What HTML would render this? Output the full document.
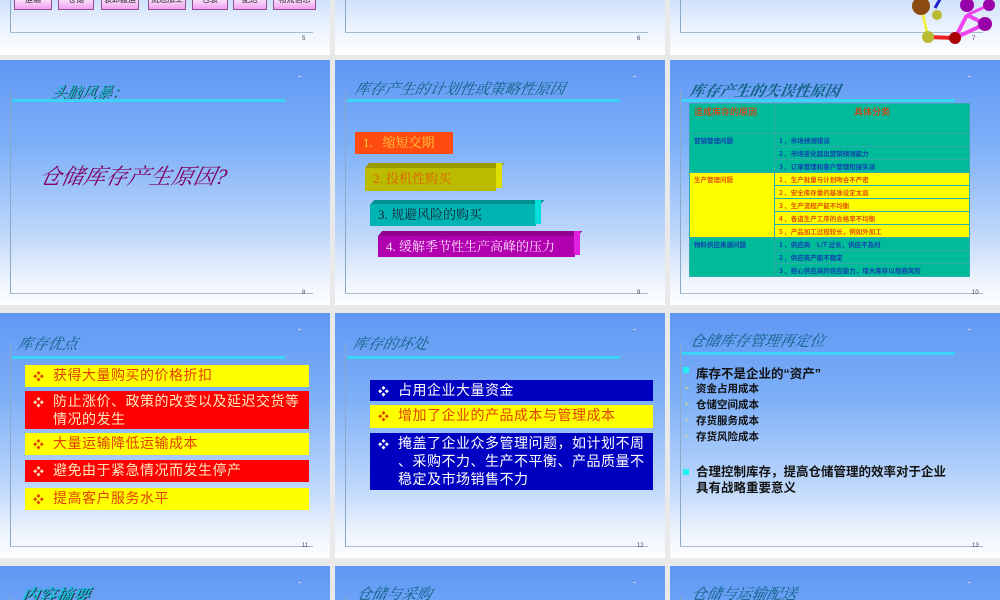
<!DOCTYPE html><html><head><meta charset="utf-8"><style>
*{margin:0;padding:0;box-sizing:border-box}
html,body{width:1000px;height:600px;overflow:hidden}
body{background:#e9e9e9;position:relative;font-family:"Liberation Sans","Noto Sans CJK SC",sans-serif}
.s{position:absolute;width:330px;height:245px;overflow:hidden;background:linear-gradient(180deg,#5f98f4 0%,#7eb0f8 35%,#bcd6fa 70%,#eef4fd 90%,#fdfeff 100%);background-size:100% 245px;background-repeat:no-repeat}
.s *{position:absolute}
.s table,.s table *{position:static}
.vl{left:10px;top:30px;width:1px;height:203px;background:#8aa8c8}
.hl{left:10px;top:233px;width:303px;height:1px;background:#a8bcd0}
.pn{left:302px;top:230px;font-size:6px;color:#446}
.ul{left:12px;top:39px;width:273px;height:3px;background:#3cd4f4}
.dash{left:298px;top:16px;width:3px;height:1px;background:#ccd}
.t{font-family:"Liberation Serif","Noto Serif CJK SC",serif;font-style:italic;color:#1a6a9a;font-size:15px;white-space:nowrap;transform:skewX(-12deg)}
.tc{color:#15c0d8;text-shadow:1px 1px 0 #234}
.b{font-size:13px;font-family:"Liberation Serif","Noto Serif CJK SC",serif;white-space:nowrap;padding-left:8px;line-height:22px}
.box{left:25px;width:284px;font-size:14px;line-height:18px;padding:1px 0 2px 28px;font-family:"Noto Sans CJK SC",sans-serif;white-space:nowrap;letter-spacing:0.5px}
.box i{font-style:normal;left:8px;top:2px;font-size:11px}
table{position:absolute!important;border-collapse:collapse;font-size:6.5px;font-weight:bold;font-family:"Noto Sans CJK SC",sans-serif}
td{border:1px solid #3aa;height:13px;padding:0 4px;vertical-align:top;line-height:12px;white-space:nowrap}
.g{background:#00bb99;color:#1040b0}.y{background:#ffff00;color:#e05000}
.btn{top:-6px;height:16px;background:linear-gradient(#fff,#f0a0f0);border:1px solid #905090;font-size:8px;text-align:center;line-height:10px;color:#222}
</style></head><body>

<!-- row0 -->
<div class="s" style="left:0;top:-190px;">
 <div class="vl" style="top:150px;height:73px"></div><div class="hl" style="top:222px"></div><div class="pn" style="top:226px">5</div>
 <div class="btn" style="left:14px;top:184px;width:38px">运输</div>
 <div class="btn" style="left:58px;top:184px;width:36px">仓储</div>
 <div class="btn" style="left:101px;top:184px;width:38px">装卸搬运</div>
 <div class="btn" style="left:148px;top:184px;width:38px">流通加工</div>
 <div class="btn" style="left:192px;top:184px;width:36px">包装</div>
 <div class="btn" style="left:233px;top:184px;width:34px">配送</div>
 <div class="btn" style="left:273px;top:184px;width:43px">物流信息</div>
</div>
<div class="s" style="left:335px;top:-190px;"><div class="vl" style="top:150px;height:73px"></div><div class="hl" style="top:222px"></div><div class="pn" style="top:226px">6</div></div>
<div class="s" style="left:670px;top:-190px;"><div class="vl" style="top:150px;height:73px"></div><div class="hl" style="top:222px"></div><div class="pn" style="top:226px">7</div>
 <svg style="left:225px;top:180px" width="105" height="60">
  <line x1="26" y1="16" x2="33" y2="47" stroke="#ee4" stroke-width="3"/><line x1="33" y1="47" x2="60" y2="48" stroke="#e22" stroke-width="4"/>
  <line x1="60" y1="48" x2="72" y2="25" stroke="#e4e" stroke-width="4"/><line x1="60" y1="48" x2="90" y2="34" stroke="#e4e" stroke-width="4"/><line x1="72" y1="25" x2="90" y2="34" stroke="#e4e" stroke-width="4"/><line x1="72" y1="25" x2="94" y2="15" stroke="#e4e" stroke-width="3"/>
  <line x1="40" y1="18" x2="48" y2="4" stroke="#22c" stroke-width="3"/>
  <circle cx="26" cy="16" r="9" fill="#8a4a10"/><circle cx="42" cy="25" r="5" fill="#bb3"/><circle cx="33" cy="47" r="6" fill="#bb3"/><circle cx="60" cy="48" r="6" fill="#a00"/><circle cx="90" cy="34" r="7" fill="#90a"/><circle cx="72" cy="15" r="7" fill="#90a"/><circle cx="94" cy="15" r="6" fill="#90a"/>
 </svg></div>

<!-- row1 -->
<div class="s" style="left:0;top:60px"><div class="vl"></div><div class="hl"></div><div class="pn">8</div><div class="dash"></div><div class="ul"></div>
 <div class="t tc" style="left:52px;top:21px">头脑风暴：</div>
 <div class="t" style="left:40px;top:100px;font-size:22px;color:#800060">仓储库存产生原因?</div></div>
<div class="s" style="left:335px;top:60px"><div class="vl"></div><div class="hl"></div><div class="pn">9</div><div class="dash"></div><div class="ul"></div>
 <div class="t" style="left:20px;top:18px;color:#0e6080">库存产生的计划性或策略性原因</div>
 <div class="b" style="left:20px;top:72px;width:98px;height:22px;background:#ff4a10;color:#ffd040">1.&nbsp;&nbsp;&nbsp;缩短交期</div>
 <div style="left:30px;top:103px;width:135px;height:5px;background:#999900;transform:skewX(-40deg);transform-origin:bottom left"></div>
 <div class="b" style="left:30px;top:108px;width:131px;height:23px;background:#bbbb00;color:#e06000">2. 投机性购买</div>
 <div style="left:161px;top:103px;width:6px;height:25px;background:#dddd00"></div>
 <div style="left:35px;top:140px;width:170px;height:5px;background:#009090;transform:skewX(-40deg);transform-origin:bottom left"></div>
 <div class="b" style="left:35px;top:144px;width:166px;height:22px;background:#00b4b4;color:#123">3. 规避风险的购买</div>
 <div style="left:200px;top:140px;width:6px;height:24px;background:#00dddd"></div>
 <div style="left:43px;top:171px;width:200px;height:5px;background:#900090;transform:skewX(-40deg);transform-origin:bottom left"></div>
 <div class="b" style="left:43px;top:176px;width:197px;height:21px;background:#b000b0;color:#ffe0ff">4. 缓解季节性生产高峰的压力</div>
 <div style="left:239px;top:171px;width:6px;height:24px;background:#e020e0"></div></div>
<div class="s" style="left:670px;top:60px"><div class="vl"></div><div class="hl"></div><div class="pn">10</div><div class="dash"></div><div class="ul"></div>
 <div class="t" style="left:20px;top:20px;color:#0e6080;font-weight:bold">库存产生的失误性原因</div>
 <table style="left:19px;top:43px;width:281px">
 <tr class="g"><td style="width:85px;height:30px;color:#c05020;font-size:9px;line-height:16px">造成库存的原因</td><td style="color:#c05020;font-size:9px;line-height:16px;text-align:center">具体分类</td></tr>
 <tr class="g"><td rowspan="3">营销管理问题</td><td>1 、市场预测错误</td></tr><tr class="g"><td>2 、市场变化超出营销预测能力</td></tr><tr class="g"><td>3 、订单管理和客户管理衔接失误</td></tr>
 <tr class="y"><td rowspan="5">生产管理问题</td><td>1 、生产批量与计划吻合不严密</td></tr><tr class="y"><td>2 、安全库存量的基准设定太高</td></tr><tr class="y"><td>3 、生产流程产能不均衡</td></tr><tr class="y"><td>4 、各道生产工序的合格率不均衡</td></tr><tr class="y"><td>5 、产品加工过程较长，例如外加工</td></tr>
 <tr class="g"><td rowspan="3">物料供应来源问题</td><td>1 、供应商　L/T 过长，供应不及时</td></tr><tr class="g"><td>2 、供应商产能不稳定</td></tr><tr class="g"><td>3 、担心供应商的供应能力，增大库存以规避风险</td></tr>
 </table></div>

<!-- row2 -->
<div class="s" style="left:0;top:313px"><div class="vl"></div><div class="hl"></div><div class="pn">11</div><div class="dash"></div><div class="ul" style="top:43px"></div>
 <div class="t" style="left:18px;top:20px;color:#0e6080">库存优点</div>
 <div class="box" style="top:52px;height:22px;background:#ffff00;color:#e04000"><i>❖</i>获得大量购买的价格折扣</div>
 <div class="box" style="top:78px;height:38px;background:#ff0000;color:#ffe8c0"><i>❖</i>防止涨价、政策的改变以及延迟交货等<br>情况的发生</div>
 <div class="box" style="top:120px;height:22px;background:#ffff00;color:#e04000"><i>❖</i>大量运输降低运输成本</div>
 <div class="box" style="top:147px;height:22px;background:#ff0000;color:#ffe8c0"><i>❖</i>避免由于紧急情况而发生停产</div>
 <div class="box" style="top:175px;height:22px;background:#ffff00;color:#e04000"><i>❖</i>提高客户服务水平</div></div>
<div class="s" style="left:335px;top:313px"><div class="vl"></div><div class="hl"></div><div class="pn">12</div><div class="dash"></div><div class="ul" style="top:43px"></div>
 <div class="t" style="left:18px;top:20px;color:#0e6080">库存的坏处</div>
 <div class="box" style="left:35px;top:67px;height:21px;width:283px;background:#0000c0;color:#fff"><i>❖</i>占用企业大量资金</div>
 <div class="box" style="left:35px;top:92px;height:23px;width:283px;background:#ffff00;color:#e04000"><i>❖</i>增加了企业的产品成本与管理成本</div>
 <div class="box" style="left:35px;top:120px;height:57px;width:283px;background:#0000c0;color:#fff"><i>❖</i>掩盖了企业众多管理问题，如计划不周<br>、采购不力、生产不平衡、产品质量不<br>稳定及市场销售不力</div></div>
<div class="s" style="left:670px;top:313px"><div class="vl"></div><div class="hl"></div><div class="pn">13</div><div class="dash"></div><div class="ul"></div>
 <div class="t" style="left:20px;top:17px;color:#0e6080">仓储库存管理再定位</div>
 <div style="left:13px;top:54px;width:6px;height:6px;background:#20f0f0"></div>
 <div style="left:26px;top:50px;font-size:12.5px;font-weight:bold;color:#111;white-space:nowrap">库存不是企业的“资产”</div>
 <div style="left:26px;top:68px;font-size:10.5px;font-weight:bold;color:#111;line-height:16px">资金占用成本<br>仓储空间成本<br>存货服务成本<br>存货风险成本</div>
 <div style="left:14px;top:68px;font-size:7px;color:#dd8;line-height:16px">➢<br>➢<br>➢<br>➢</div>
 <div style="left:13px;top:156px;width:6px;height:6px;background:#20f0f0"></div>
 <div style="left:26px;top:151px;font-size:12.5px;font-weight:bold;color:#111;line-height:16px;white-space:nowrap">合理控制库存，提高仓储管理的效率对于企业<br>具有战略重要意义</div></div>

<!-- row3 -->
<div class="s" style="left:0;top:566px;height:34px"><div class="dash"></div><div class="vl" style="top:30px"></div>
 <div class="t tc" style="left:22px;top:15px;font-size:17px;font-weight:bold">内容摘要</div></div>
<div class="s" style="left:335px;top:566px;height:34px"><div class="dash"></div><div class="vl" style="top:30px"></div>
 <div class="t" style="left:22px;top:17px;color:#0e6080">仓储与采购</div></div>
<div class="s" style="left:670px;top:566px;height:34px"><div class="dash"></div><div class="vl" style="top:30px"></div>
 <div class="t" style="left:22px;top:17px;color:#0e6080">仓储与运输配送</div></div>
</body></html>
